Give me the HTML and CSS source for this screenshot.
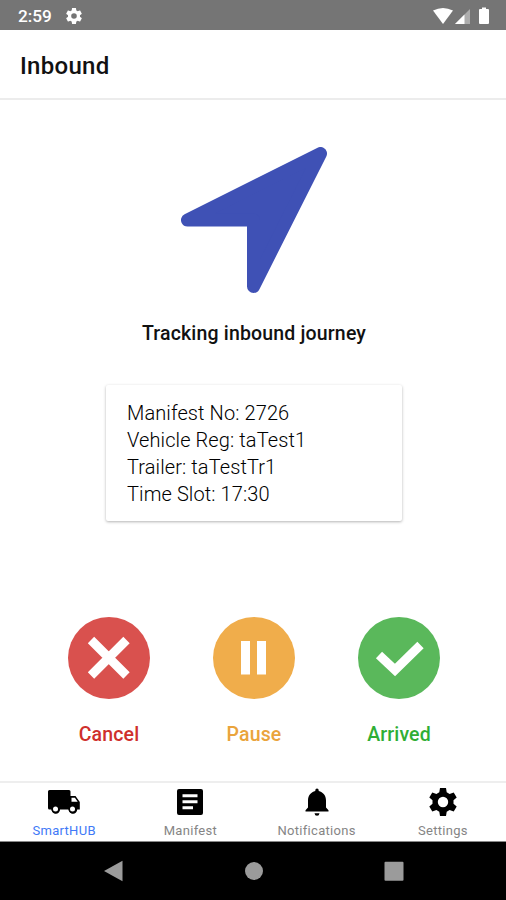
FILE: index.html
```html
<!DOCTYPE html>
<html lang="en">
<head>
<meta charset="utf-8">
<title>Inbound</title>
<link rel="stylesheet" href="styles.css">
</head>
<body>
<div class="screen">
  <div class="status">
    <span class="clock">2:59</span>
    <svg class="status-gear" width="16" height="16" viewBox="2 2 20 20"><path fill="#fff" d="M19.43 12.98c.04-.32.07-.64.07-.98s-.03-.66-.07-.98l2.11-1.65c.19-.15.24-.42.12-.64l-2-3.46c-.12-.22-.39-.3-.61-.22l-2.49 1c-.52-.4-1.08-.73-1.69-.98l-.38-2.65C14.46 2.18 14.25 2 14 2h-4c-.25 0-.46.18-.49.42l-.38 2.65c-.61.25-1.17.59-1.69.98l-2.49-1c-.23-.09-.49 0-.61.22l-2 3.46c-.13.22-.07.49.12.64l2.11 1.65c-.04.32-.07.65-.07.98s.03.66.07.98l-2.11 1.65c-.19.15-.24.42-.12.64l2 3.46c.12.22.39.3.61.22l2.49-1c.52.4 1.08.73 1.69.98l.38 2.65c.03.24.24.42.49.42h4c.25 0 .46-.18.49-.42l.38-2.65c.61-.25 1.17-.59 1.69-.98l2.49 1c.23.09.49 0 .61-.22l2-3.46c.12-.22.07-.49-.12-.64zM12 15.5A3.5 3.5 0 1 1 12 8.500a3.500 3.500 0 0 1 0 7z"/></svg>
    <svg class="signals" width="58" height="18" viewBox="0 0 58 18">
      <path fill="#fff" d="M0 3.500Q10 -1.500 20 3.500L10 17Z"/>
      <path fill="#adadad" d="M37 2V17H22Z"/>
      <path fill="#fff" d="M31.500 7.500V17H22Z"/>
      <path fill="#fff" d="M47 2h2V.5h4V2h2q1 0 1 1v13q0 1-1 1h-8q-1 0-1-1V3q0-1 1-1z"/>
    </svg>
  </div>
  <header class="header"><h1>Inbound</h1></header>
  <main class="content">
    <svg class="arrow" width="146" height="146" viewBox="0 0 146 146"><path d="M139.500 6.500L6.500 73H72.500V139.500Z"/></svg>
    <h2>Tracking inbound journey</h2>
    <section class="card">
      <p>Manifest No: 2726</p>
      <p>Vehicle Reg: taTest1</p>
      <p>Trailer: taTestTr1</p>
      <p>Time Slot: 17:30</p>
    </section>
    <div class="actions">
      <button class="action cancel">
        <svg width="82" height="82" viewBox="0 0 82 82"><circle cx="41" cy="41" r="41"/><path d="M23 23L58.500 58.500M58.500 23L23 58.500"/></svg>
        <span>Cancel</span>
      </button>
      <button class="action pause">
        <svg width="82" height="82" viewBox="0 0 82 82"><circle cx="41" cy="41" r="41"/><path d="M32.500 24V57.500M48.500 24V57.500"/></svg>
        <span>Pause</span>
      </button>
      <button class="action arrived">
        <svg width="82" height="82" viewBox="0 0 82 82"><circle cx="41" cy="41" r="41"/><path d="M21 38L37 53L62.500 28"/></svg>
        <span>Arrived</span>
      </button>
    </div>
  </main>
  <nav class="tabs">
    <a class="tab active">
      <svg width="32" height="32" viewBox="0 0 32 32"><path fill-rule="evenodd" d="M1.500 4H21Q22.500 4 22.500 5.500V10H27.500L31.800 16V23.500H29.200A4.200 4.200 0 0 1 20.800 23.500H12A4.200 4.200 0 0 1 3.600 23.500H1.500Q0 23.500 0 22V5.500Q0 4 1.500 4ZM23.500 11.800V15.700H29.700L26.900 11.800Z"/><circle cx="7.500" cy="23" r="4.200"/><circle cx="24.500" cy="23" r="4.200"/><circle class="hole" cx="7.500" cy="23" r="2.500"/><circle class="hole" cx="24.500" cy="23" r="2.500"/></svg>
      <span>SmartHUB</span>
    </a>
    <a class="tab">
      <svg width="32" height="32" viewBox="0 0 32 32"><path fill-rule="evenodd" d="M5 3H27Q29 3 29 5V27Q29 29 27 29H5Q3 29 3 27V5Q3 3 5 3ZM8.500 8.300V11.300H23.500V8.300ZM8.500 14.300V17.300H23.500V14.300ZM8.500 20.300V23.300H19V20.300Z"/></svg>
      <span>Manifest</span>
    </a>
    <a class="tab">
      <svg width="32" height="32" viewBox="0 0 32 32"><path d="M14.300 4.200a1.700 1.700 0 0 1 3.400 0V5C22 6 25 9.500 25 14.500V21.500L27.500 24.200V25.500H4.500V24.200L7 21.500V14.500C7 9.500 10 6 14.300 5ZM13.500 27.300H18.500Q18.200 29.800 16 29.800T13.500 27.300Z"/></svg>
      <span>Notifications</span>
    </a>
    <a class="tab">
      <svg width="32" height="32" viewBox="0 0 32 32"><path fill-rule="evenodd" d="M13 2H19L19.700 6.200L22.600 7.900L26.700 6.400L29.700 11.600L26.500 14.300V17.700L29.700 20.400L26.700 25.600L22.600 24.100L19.700 25.800L19 30H13L12.300 25.800L9.400 24.100L5.300 25.600L2.300 20.400L5.500 17.700V14.300L2.300 11.600L5.300 6.400L9.400 7.900L12.300 6.200ZM16 10.800A5.200 5.200 0 1 0 16 21.200A5.200 5.200 0 1 0 16 10.800Z"/></svg>
      <span>Settings</span>
    </a>
  </nav>
  <div class="system">
    <svg width="20" height="22" viewBox="0 0 20 22"><path d="M18.500 .8V21.200L0 11Z"/></svg>
    <svg width="20" height="20" viewBox="0 0 20 20"><circle cx="10" cy="10" r="9"/></svg>
    <svg width="20" height="20" viewBox="0 0 20 20"><rect x=".5" y=".8" width="19" height="19" rx="1"/></svg>
  </div>
</div>
</body>
</html>
```
FILE: styles.css
```css
* { box-sizing: border-box; }
body { margin: 0; background: #fff; font-family: Roboto, "Liberation Sans", sans-serif; color: #111; }
h1, h2, p { margin: 0; }
svg { display: block; flex: none; }
.screen { width: 506px; height: 900px; display: flex; flex-direction: column; overflow: hidden; }

.status { height: 30px; flex: none; display: flex; align-items: center; background: #757575; padding: 0 15px 0 18px; }
.clock { color: #fff; font-size: 17.2px; font-weight: 500; line-height: 30px; padding-top: 2px; }
.status-gear { margin-left: 14px; margin-top: 1px; }
.signals { margin-left: auto; margin-top: 1px; }

.header { height: 70px; flex: none; display: flex; align-items: center; padding: 4px 20px 0; border-bottom: 2px solid #ececec; }
h1 { font-size: 24px; font-weight: 500; line-height: 30px; letter-spacing: .3px; }

.content { flex: 1; display: flex; flex-direction: column; align-items: center; padding: 47px 0 0 2px; }
.arrow path { fill: #3f51b5; stroke: #3f51b5; stroke-width: 13; stroke-linejoin: round; }
h2 { margin-top: 28px; font-size: 19.5px; font-weight: 500; line-height: 26px; letter-spacing: .17px; }

.card { width: 296px; height: 136px; margin-top: 38px; padding: 15px 21px; font-size: 20px; font-weight: 300; line-height: 27px; letter-spacing: .1px; border-radius: 2px; background: #fff; box-shadow: 0 1px 3px rgba(0, 0, 0, .3); color: #000; }

.actions { width: 435px; margin-top: 96px; display: grid; grid-template-columns: repeat(3, 1fr); }
.action { display: flex; flex-direction: column; align-items: center; gap: 23px; border: 0; padding: 0; background: none; font: 500 19.5px/26px Roboto, sans-serif; letter-spacing: .15px; }
.action path { fill: none; stroke: #fff; stroke-width: 9; }
.cancel { color: #cf2f2c; }
.cancel circle { fill: #d9514e; }
.pause { color: #eaa43c; }
.pause circle { fill: #f0ad4b; }
.arrived { color: #2fae35; }
.arrived circle { fill: #5ab85b; }

.tabs { height: 61px; flex: none; display: grid; grid-template-columns: repeat(4, 1fr); padding-left: 1px; border-top: 2px solid #eee; border-bottom: 1px solid #888; }
.tab { display: flex; flex-direction: column; align-items: center; padding-top: 3px; font-size: 13px; line-height: 18px; color: #858585; letter-spacing: .3px; }
.tab span { margin-top: 4px; }
.tab path, .tab circle { fill: #000; }
.tab .hole { fill: #fff; }
.tab.active { color: #4179f7; }

.system { height: 58px; flex: none; display: flex; align-items: center; justify-content: center; gap: 120px; padding-left: 1px; background: #000; }
.system svg { fill: #9b9b9b; }
```
